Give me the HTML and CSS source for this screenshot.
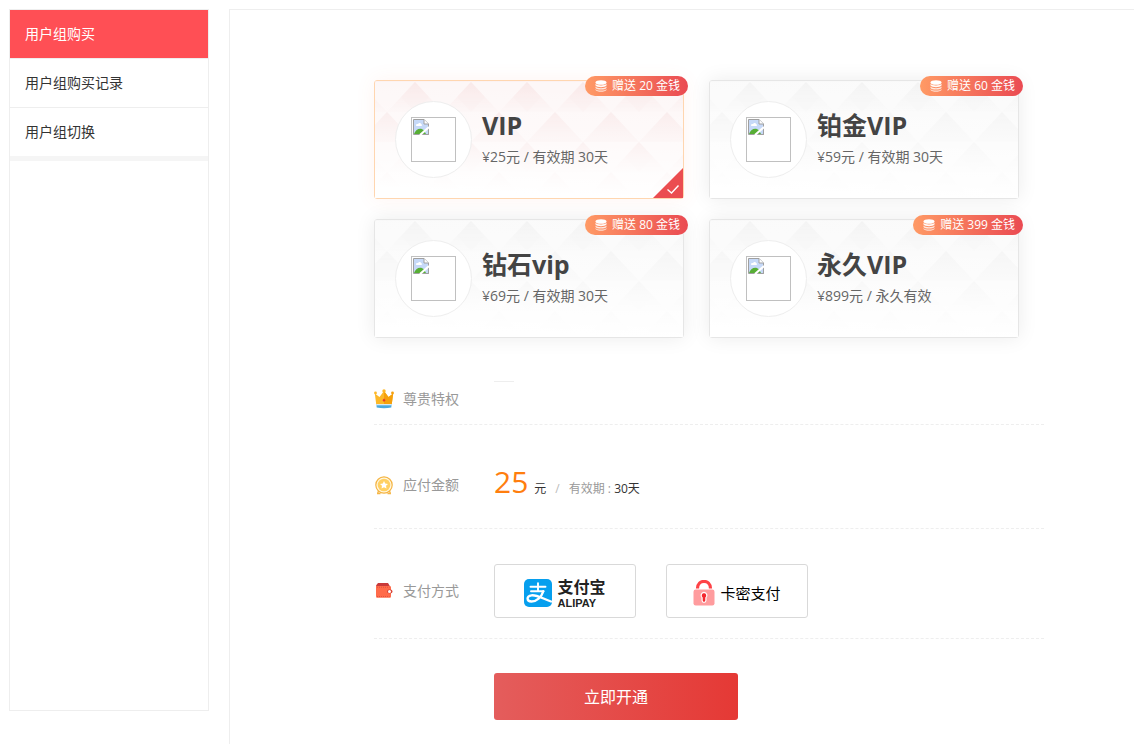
FILE: index.html
```html
<!DOCTYPE html>
<html lang="zh-CN">
<head>
<meta charset="utf-8">
<meta name="viewport" content="width=device-width, initial-scale=1">
<title>用户组购买</title>
<link rel="stylesheet" href="styles.css">
</head>
<body>
<svg class="defs" width="0" height="0" aria-hidden="true">
  <defs>
    <linearGradient id="facet-fade" x1="0" y1="0" x2="0" y2="1">
      <stop offset="0" stop-color="#fff" stop-opacity="1"/>
      <stop offset="1" stop-color="#fff" stop-opacity="0.1"/>
    </linearGradient>
    <linearGradient id="sheet-fade" x1="0.5" y1="0" x2="0.4" y2="1">
      <stop offset="0" stop-color="#fff" stop-opacity="0.1"/>
      <stop offset="0.5" stop-color="#fff" stop-opacity="0.45"/>
      <stop offset="0.95" stop-color="#fff" stop-opacity="1"/>
    </linearGradient>
    <pattern id="facets" x="12" y="1" width="56" height="60" patternUnits="userSpaceOnUse">
      <path d="M28 0 56 30H0Z" fill="url(#facet-fade)"/>
      <path d="M28 0 42 15 28 30 14 15Z" fill="#fff" fill-opacity="0.3"/>
      <path d="M0 30 28 60H-28Z M56 30 84 60H28Z" fill="#fff" fill-opacity="0.25"/>
      <path d="M0 30 28 60H0Z" fill="url(#facet-fade)"/>
      <path d="M56 30V60H28Z" fill="url(#facet-fade)"/>
    </pattern>
    <mask id="facet-mask"><rect width="310" height="120" fill="url(#facets)"/></mask>
    <symbol id="sheet" viewBox="0 0 308 117">
      <rect width="308" height="117" fill="currentColor" opacity="0.35"/>
      <rect width="308" height="117" fill="currentColor" mask="url(#facet-mask)"/>
      <rect width="308" height="117" fill="url(#sheet-fade)"/>
    </symbol>
    <symbol id="missing" viewBox="0 0 16 16">
      <path d="M.5.5H11L15.500 5V15.500H.5Z" fill="#c6d9f8" stroke="#a0a0a0"/>
      <path d="M3 6.500C3 5 4.500 5 5 5.200 5.500 3.500 8 3.500 8 5.200 9.500 5 9.500 7 8 7H3.500Z" fill="#fff"/>
      <path d="M1 15C3 9.500 8 8.500 11 11.500L13 15Z" fill="#57ae35"/>
      <path d="M11 .5V5H15.500" fill="#fff" stroke="#a0a0a0"/>
      <path d="M7 16 16 8" stroke="#fff" stroke-width="2.200"/>
      <path d="M12 15.500H15.500V12" fill="none" stroke="#a0a0a0"/>
    </symbol>
    <symbol id="coins" viewBox="0 0 12 12">
      <ellipse cx="6" cy="2.500" rx="5.500" ry="2.300" fill="#fff"/>
      <path d="M.5 3.800C2 6 10 6 11.500 3.800V5.600C10 7.800 2 7.800.5 5.600Z" fill="#fff" opacity="0.95"/>
      <path d="M.5 6.600C2 8.700 10 8.700 11.500 6.600V8C10 10 2 10 .5 8Z" fill="#fff" opacity="0.8"/>
      <path d="M.5 9C2 11 10 11 11.500 9V10C10 12.400 2 12.400.5 10Z" fill="#fff" opacity="0.7"/>
    </symbol>
  </defs>
</svg>

<div class="page">
  <nav class="sidebar" aria-label="用户组">
    <a class="nav-link active" href="#buy" aria-current="page">用户组购买</a>
    <a class="nav-link" href="#history">用户组购买记录</a>
    <a class="nav-link" href="#switch">用户组切换</a>
  </nav>

  <main class="main">
    <form class="order">
      <div class="plans" role="radiogroup" aria-label="用户组">
        <label class="plan">
          <input class="pick" type="radio" name="plan" value="vip" checked>
          <svg class="sheet" preserveAspectRatio="none" aria-hidden="true"><use href="#sheet"/></svg>
          <span class="avatar"><span class="thumb"><svg width="16" height="16" aria-hidden="true"><use href="#missing"/></svg></span></span>
          <span class="info"><span class="name">VIP</span><span class="price">¥25元 / 有效期 30天</span></span>
          <span class="gift"><svg width="12" height="12" aria-hidden="true"><use href="#coins"/></svg>赠送 20 金钱</span>
          <svg class="tick" width="30" height="30" viewBox="0 0 30 30" aria-hidden="true"><path d="M30 0V30H0Z" fill="#eb4d50"/><path d="M14.500 21.500 18.500 25 25.500 17.500" fill="none" stroke="#fff" stroke-width="1.400"/></svg>
        </label>
        <label class="plan">
          <input class="pick" type="radio" name="plan" value="platinum">
          <svg class="sheet" preserveAspectRatio="none" aria-hidden="true"><use href="#sheet"/></svg>
          <span class="avatar"><span class="thumb"><svg width="16" height="16" aria-hidden="true"><use href="#missing"/></svg></span></span>
          <span class="info"><span class="name">铂金VIP</span><span class="price">¥59元 / 有效期 30天</span></span>
          <span class="gift"><svg width="12" height="12" aria-hidden="true"><use href="#coins"/></svg>赠送 60 金钱</span>
        </label>
        <label class="plan">
          <input class="pick" type="radio" name="plan" value="diamond">
          <svg class="sheet" preserveAspectRatio="none" aria-hidden="true"><use href="#sheet"/></svg>
          <span class="avatar"><span class="thumb"><svg width="16" height="16" aria-hidden="true"><use href="#missing"/></svg></span></span>
          <span class="info"><span class="name">钻石vip</span><span class="price">¥69元 / 有效期 30天</span></span>
          <span class="gift"><svg width="12" height="12" aria-hidden="true"><use href="#coins"/></svg>赠送 80 金钱</span>
        </label>
        <label class="plan">
          <input class="pick" type="radio" name="plan" value="forever">
          <svg class="sheet" preserveAspectRatio="none" aria-hidden="true"><use href="#sheet"/></svg>
          <span class="avatar"><span class="thumb"><svg width="16" height="16" aria-hidden="true"><use href="#missing"/></svg></span></span>
          <span class="info"><span class="name">永久VIP</span><span class="price">¥899元 / 永久有效</span></span>
          <span class="gift"><svg width="12" height="12" aria-hidden="true"><use href="#coins"/></svg>赠送 399 金钱</span>
        </label>
      </div>

      <div class="row perks">
        <div class="row-label">
          <svg width="20" height="20" viewBox="0 0 20 20" aria-hidden="true">
            <path d="M2.300 14H17.700L17.300 18.500Q10 20 2.700 18.500Z" fill="#4ba9de"/>
            <path d="M2.300 14H17.700V16.300H2.300Z" fill="#d9eaf2"/>
            <path d="M.8 4.500 5.500 8 10 2 14.500 8 19.200 4.500 17.800 15H2.200Z" fill="#fdb827"/>
            <path d="M10 2 14.500 8 19.200 4.500 17.800 15H10Z" fill="#f5a00c"/>
            <circle cx="10" cy="2" r="1.700" fill="#fdb827"/><circle cx="1.500" cy="4" r="1.400" fill="#fdb827"/><circle cx="18.500" cy="4" r="1.400" fill="#f5a00c"/>
            <path d="M10 9.500 11.500 11.200 10 13 8.500 11.200Z" fill="#e63b2e"/>
          </svg>
          尊贵特权
        </div>
        <div class="row-body perk-list"></div>
      </div>

      <div class="row amount">
        <div class="row-label">
          <svg width="20" height="20" viewBox="0 0 20 20" aria-hidden="true">
            <path d="M5 15 3.500 18.500M15 15 16.500 18.500M3 18.500H6.500M13.500 18.500H17" stroke="#f5b544" stroke-width="1.300"/>
            <circle cx="10" cy="10" r="8.200" fill="#fff6df" stroke="#f5b544" stroke-width="1.200"/>
            <circle cx="10" cy="10" r="6.300" fill="#ffd062"/>
            <path d="M10 6 11.200 8.500 14 8.900 12 10.800 12.500 13.600 10 12.300 7.500 13.600 8 10.800 6 8.900 8.800 8.500Z" fill="#fff"/>
          </svg>
          应付金额
        </div>
        <div class="row-body total">
          <strong class="sum">25</strong><span class="unit">元</span><span class="slash">/</span><span class="term">有效期 : <span class="days">30天</span></span>
        </div>
      </div>

      <div class="row payment">
        <div class="row-label">
          <svg width="20" height="20" viewBox="0 0 20 20" aria-hidden="true">
            <path d="M2 4.500 4 2H14L15.500 4.500V7H2Z" fill="#c93a3a"/>
            <path d="M2 5H15.500C16.500 5 17 5.500 17 6.500V15C17 16.300 16.500 16.800 15.500 16.800H3.500C2.500 16.800 2 16.300 2 15Z" fill="#ff6b4a"/>
            <path d="M3 6.200H15.500M3 15.500H15.500" stroke="#d9483a" stroke-dasharray="1 1" stroke-width=".7"/>
            <rect x="13" y="8.500" width="5.500" height="3.800" rx="1.900" fill="#d9483a"/>
            <circle cx="15.500" cy="10.400" r="1.500" fill="#fff"/>
          </svg>
          支付方式
        </div>
        <div class="row-body methods" role="radiogroup" aria-label="支付方式">
          <label class="method">
            <input class="pick" type="radio" name="pay" value="alipay">
            <svg width="28" height="28" viewBox="0 0 28 28" aria-hidden="true">
              <rect width="28" height="28" rx="5" fill="#069fee"/>
              <g fill="none" stroke="#fff" stroke-linecap="round">
                <path d="M6.500 7.800H21.500M14 4.300V12M7 12.200H19.500" stroke-width="1.900"/>
                <path d="M19.300 12.300C17.500 18 12.500 22.500 7.500 22.500 2.500 22.500 2 17 7.500 16.300 13 15.700 19 19.800 27 22.500" stroke-width="2.300"/>
              </g>
            </svg>
            <span class="brand"><span class="brand-cn">支付宝</span><span class="brand-en">ALIPAY</span></span>
          </label>
          <label class="method">
            <input class="pick" type="radio" name="pay" value="card">
            <svg width="22" height="26" viewBox="0 0 22 26" aria-hidden="true">
              <path d="M4.500 8.500C4.500-1 17.500-1 17.500 8.500" fill="none" stroke="#fe4246" stroke-width="3.200"/>
              <rect x=".5" y="9.500" width="21" height="16" rx="2.200" fill="#ff9c9e"/>
              <path d="M11 12.300A3.200 3.200 0 0 1 12.900 17.800V20.500A1.900 1.900 0 0 1 9.100 20.500V17.800A3.200 3.200 0 0 1 11 12.300Z" fill="#f4272e" stroke="#fff" stroke-width="1.200"/>
            </svg>
            卡密支付
          </label>
        </div>
      </div>

      <button class="submit" type="submit">立即开通</button>
    </form>
  </main>
</div>
</body>
</html>
```

FILE: styles.css
```css
* {
  box-sizing: border-box;
}

body {
  margin: 0;
  background: #fff;
  color: #333;
  font: 14px/20px "Open Sans", "Noto Sans CJK SC", sans-serif;
}

.defs {
  position: absolute;
}

.page {
  display: flex;
  align-items: flex-start;
  gap: 20px;
  padding: 9px 0 0 9px;
}

.sidebar {
  flex: 0 0 200px;
  min-height: 702px;
  border: 1px solid #eee;
}

.nav-link {
  display: block;
  padding: 14px 15px;
  border-bottom: 1px solid #eee;
  color: #333;
  text-decoration: none;
}

.nav-link:last-child {
  border-bottom: 5px solid #f5f5f5;
}

.nav-link.active {
  background: #ff4f55;
  background-clip: padding-box;
  color: #fff;
}

.main {
  flex: 1;
  min-width: 0;
  padding: 70px 24px 24px 144px;
  border: solid #eee;
  border-width: 1px 0 0 1px;
}

.order {
  max-width: 670px;
}

.plans {
  display: grid;
  grid-template-columns: repeat(auto-fill, 310px);
  gap: 20px 25px;
}

.plan {
  position: relative;
  display: flex;
  gap: 10px;
  padding: 20px;
  border: 1px solid #e6e6e6;
  border-radius: 3px;
  box-shadow: 0 0 20px rgba(0, 0, 0, 0.08);
  color: #f2f2f2;
  cursor: pointer;
}

.plan:has(:checked) {
  border-color: #ffd6b0;
  box-shadow: 0 0 20px rgba(255, 120, 80, 0.08);
  color: #f8e6e6;
}

.pick {
  position: absolute;
  inset: 0;
  margin: 0;
  opacity: 0;
}

.sheet {
  position: absolute;
  inset: 0;
  width: 100%;
  height: 100%;
}

.avatar {
  position: relative;
  display: grid;
  place-items: center;
  width: 77px;
  height: 77px;
  border: 1px solid #eee;
  border-radius: 50%;
  background: #fff;
}

.thumb {
  display: block;
  width: 45px;
  height: 45px;
  padding: 1px;
  border: 1px solid #c0c0c0;
}

.thumb svg {
  display: block;
}

.info {
  position: relative;
  display: flex;
  flex-direction: column;
  padding-top: 8px;
}

.name {
  color: #444;
  font-size: 25px;
  font-weight: 700;
  line-height: 32px;
}

.price {
  color: #666;
  line-height: 32px;
}

.gift {
  position: absolute;
  top: -5px;
  right: -5px;
  display: flex;
  align-items: center;
  gap: 5px;
  padding: 0 8px 0 10px;
  border-radius: 10px;
  background: linear-gradient(90deg, #ff9a65, #ea4a52);
  color: #fff;
  font-size: 12px;
}

.tick {
  position: absolute;
  right: 0;
  bottom: 0;
}

.row {
  display: flex;
  align-items: center;
  border-bottom: 1px dashed #eee;
}

.row-label {
  display: flex;
  flex: 0 0 120px;
  align-items: center;
  gap: 9px;
  color: #999;
}

.perks {
  min-height: 51px;
  margin-top: 36px;
}

.perk-list {
  align-self: flex-start;
  width: 20px;
  margin-top: 7px;
  border-top: 1px solid #eee;
}

.amount {
  min-height: 104px;
  padding-top: 17px;
}

.total {
  display: flex;
  align-items: baseline;
  font-size: 12px;
  line-height: 40px;
}

.sum {
  color: #ff7e0e;
  font-size: 30px;
  font-weight: 400;
}

.unit {
  margin-left: 6px;
}

.slash {
  margin: 0 9px;
  color: #bbb;
}

.term {
  color: #999;
}

.days {
  color: #333;
}

.payment {
  padding: 35px 0 20px;
}

.methods {
  display: flex;
  flex-wrap: wrap;
  gap: 30px;
}

.method {
  position: relative;
  display: flex;
  align-items: center;
  justify-content: center;
  gap: 5px;
  width: 142px;
  height: 54px;
  padding-top: 3px;
  border: 1px solid #d9d9d9;
  border-radius: 3px;
  color: #000;
  font-size: 15px;
  cursor: pointer;
}

.brand {
  display: flex;
  flex-direction: column;
  color: #222;
  font-weight: 700;
}

.brand-cn {
  font-size: 16px;
  line-height: 20px;
}

.brand-en {
  font: 700 11px/12px "Liberation Sans", sans-serif;
}

.submit {
  display: block;
  width: 244px;
  height: 47px;
  margin: 34px 0 0 120px;
  border: 0;
  border-radius: 3px;
  background: linear-gradient(90deg, #e45d5c, #e53935);
  color: #fff;
  font: inherit;
  font-size: 16px;
  cursor: pointer;
}
```
